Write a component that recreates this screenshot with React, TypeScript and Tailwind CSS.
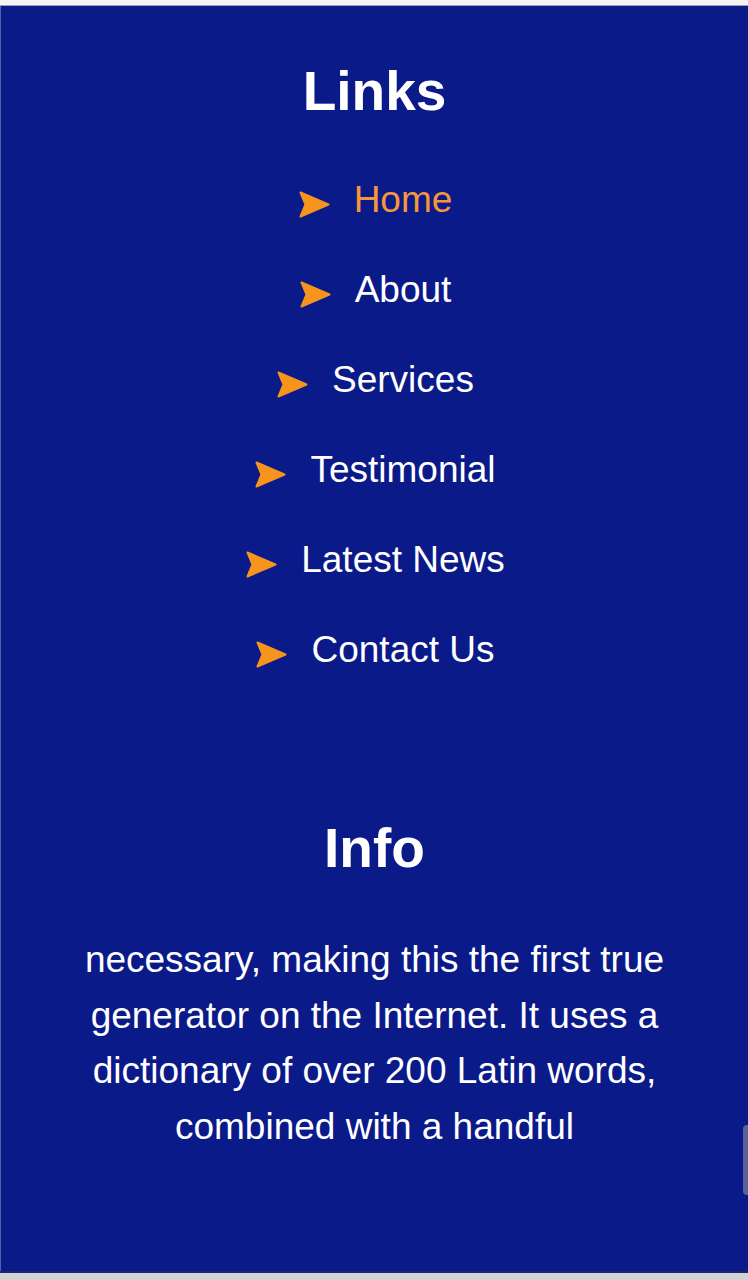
import React from "react";

const links = ["Home", "About", "Services", "Testimonial", "Latest News", "Contact Us"];

function Arrow() {
  return (
    <svg width="31" height="27" viewBox="0 0 31 27" className="shrink-0 mt-[8px]">
      <path d="M1.5 1.5 L29.5 13.5 L1.5 25.5 L6.5 13.5 Z" fill="#f7941d" stroke="#f7941d" strokeWidth="2" strokeLinejoin="round" />
    </svg>
  );
}

export default function App() {
  return (
    <div className="relative flex h-[1280px] w-[748px] flex-col overflow-hidden bg-white" style={{ fontFamily: '"Liberation Sans", Arial, sans-serif' }}>
      <div className="h-[6px] border-b border-[#9aa0b8] bg-[#f4f4f6]" />
      <div className="flex flex-1 flex-col items-center border-l border-[#5560a8] bg-[#0b1a89] pt-[55px] text-white">
        <h2 className="text-[55px] font-bold leading-[60px]">Links</h2>
        <ul className="mt-[34px] flex flex-col items-center">
          {links.map((l, i) => (
            <li key={l} className="flex h-[90px] items-center gap-[24px] pl-[2px]">
              <Arrow />
              <span className={`text-[37px] leading-[44px] ${i === 0 ? "text-[#f5963a]" : "text-white"}`}>{l}</span>
            </li>
          ))}
        </ul>
        <h2 className="mt-[123px] text-[55px] font-bold leading-[60px]">Info</h2>
        <p className="mt-[54px] text-center text-[37px] leading-[55.5px]">
          necessary, making this the first true
          <br />
          generator on the Internet. It uses a
          <br />
          dictionary of over 200 Latin words,
          <br />
          combined with a handful
        </p>
      </div>
      <div className="h-[9px] border-t-2 border-[#1a2570] bg-[#d2d2d4]" />
      <div className="absolute right-0 top-[1125px] h-[70px] w-[5px] rounded-l-sm bg-[#5b6096]" />
    </div>
  );
}
